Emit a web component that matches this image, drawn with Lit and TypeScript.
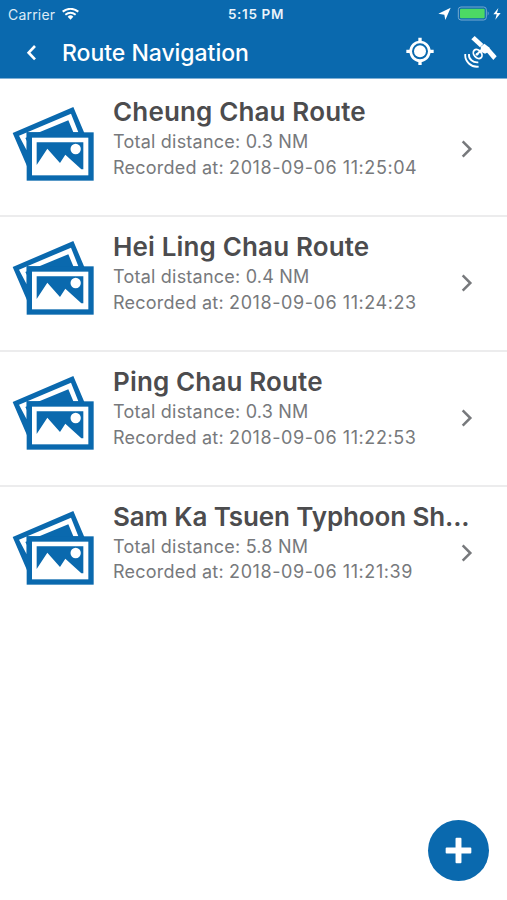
import { LitElement, html, css, svg } from "lit";
import { customElement, property } from "lit/decorators.js";
import { classMap } from "lit/directives/class-map.js";

interface Route {
  name: string;
  distance: string;
  recorded: string;
}

const ROUTES: Route[] = [
  { name: "Cheung Chau Route", distance: "0.3 NM", recorded: "2018-09-06 11:25:04" },
  { name: "Hei Ling Chau Route", distance: "0.4 NM", recorded: "2018-09-06 11:24:23" },
  { name: "Ping Chau Route", distance: "0.3 NM", recorded: "2018-09-06 11:22:53" },
  { name: "Sam Ka Tsuen Typhoon Sh...", distance: "5.8 NM", recorded: "2018-09-06 11:21:39" },
];

const SATELLITE = svg`
  <g fill="#fff">
    <path d="M66 32L76 22L102 46L92 56z"/>
    <path d="M110 68L120 58L142 83L132 94z"/>
    <path d="M94 54L105 45L121 57L119 69L107 75L95 69z"/>
  </g>
  <g fill="none" stroke="#fff">
    <ellipse cx="85" cy="76" rx="15" ry="11" transform="rotate(48 85 76)" stroke-width="5.500"/>
    <path d="M98 62L84 76" stroke-width="6"/>
    <path d="M59 76C57 91 71 103 87 101" stroke-width="5.500"/>
    <path d="M48 76C45 98 66 117 88 114" stroke-width="5.500"/>
  </g>
  <circle cx="83" cy="77" r="4" fill="#fff"/>`;

@customElement("status-bar")
class StatusBar extends LitElement {
  static styles = css`
    :host { display: grid; grid-template-columns: 1fr auto 1fr; align-items: center; height: 27px; color: #fff; }
    .left { display: flex; align-items: center; gap: 7px; padding-left: 8px; }
    .carrier { font-size: 14px; line-height: 27px; letter-spacing: 0.2px; color: #dcebf6; }
    .time { font-size: 13.5px; font-weight: 600; line-height: 27px; letter-spacing: 0.65px; margin-left: 5px; padding-top: 1px; color: #eaf3fa; }
    .right { display: flex; justify-content: flex-end; padding-right: 5px; }
    svg { display: block; }
  `;
  render() {
    return html`
      <div class="left">
        <span class="carrier">Carrier</span>
        <svg width="17" height="12" viewBox="0 2 51 36">
          <g fill="none" stroke="#fff" stroke-width="6">
            <path d="M2 13Q25.500 -4 49 13"/><path d="M10 22Q25.500 10 41 22"/>
          </g>
          <path d="M17 28Q25.500 20 34 28L25.500 37z" fill="#fff"/>
        </svg>
      </div>
      <span class="time">5:15 PM</span>
      <div class="right">
        <svg width="64" height="16" viewBox="145 17 192 48">
          <path d="M183 22L146 40L164 43L167 59z" fill="#fff"/>
          <rect x="206" y="20" width="84" height="39" rx="8" fill="none" stroke="#76a9d1" stroke-width="3"/>
          <rect x="211" y="25" width="74" height="29" rx="3" fill="#4cd964"/>
          <path d="M294 33q6 6 0 13z" fill="#76a9d1"/>
          <path d="M326 23L311 42H321L317 58L333 38H322z" fill="#fff"/>
        </svg>
      </div>`;
  }
}

@customElement("nav-bar")
class NavBar extends LitElement {
  static styles = css`
    :host { display: flex; align-items: center; height: 51px; padding: 0 9px 0 25px; color: #fff; }
    .title { flex: 1; margin-left: 25px; font-size: 23px; font-weight: 500; line-height: 50px; letter-spacing: -0.03px; white-space: nowrap; }
    .actions { display: flex; align-items: center; gap: 29px; margin-bottom: 1px; }
    svg { display: block; flex: none; }
  `;
  render() {
    return html`
      <svg width="12" height="18" viewBox="0 3 36 54"><path d="M30 9L11 29L30 49" fill="none" stroke="#fff" stroke-width="8"/></svg>
      <span class="title">Route Navigation</span>
      <div class="actions">
        <svg width="30" height="30" viewBox="46 111 90 90">
          <circle cx="91" cy="154" r="28" fill="none" stroke="#fff" stroke-width="8"/>
          <circle cx="91" cy="154" r="18" fill="#fff"/>
          <path d="M91 113V126M91 182V195M50 154H63M119 154H132" stroke="#fff" stroke-width="10" />
        </svg>
        <svg width="34" height="34" viewBox="44 19 102 102">${SATELLITE}</svg>
      </div>`;
  }
}

@customElement("route-row")
class RouteRow extends LitElement {
  @property({ attribute: false }) route!: Route;
  static styles = css`
    :host { display: flex; align-items: flex-start; box-sizing: border-box; height: 134.8px; padding: 12.600px 34px 0 12px; border-bottom: 2px solid #ececed; }
    .photo { margin-top: 10.400px; }
    .text { flex: 1; min-width: 0; margin-left: 17px; }
    .name { font-size: 26px; font-weight: 600; line-height: 34px; color: #4c4c4e; letter-spacing: 0.15px; white-space: nowrap; }
    .name.long { letter-spacing: -0.12px; }
    .meta { font-size: 18px; line-height: 25.900px; color: #77797c; letter-spacing: 0.22px; white-space: nowrap; }
    .stamp { letter-spacing: 0.57px; }
    .chevron { margin-top: 43.400px; }
    svg { display: block; flex: none; }
  `;
  render() {
    return html`
      <svg class="photo" width="84" height="76" viewBox="36 47 252 228">
        <path d="M38 128L220 50L253 128V150H90V230H82z" fill="#0a69ae"/>
        <path d="M57 136L213 70L235 126H80V180z" fill="#fff"/>
        <path d="M76 143L205 90L221 128H84V158z" fill="#0a69ae"/>
        <rect x="80" y="126" width="201" height="145" fill="#0a69ae"/>
        <rect x="96" y="142" width="169" height="113" fill="#fff"/>
        <path d="M110 156H250V237H244L196 193L180 218L142 175L110 224z" fill="#0a69ae"/>
        <circle cx="227" cy="176" r="15.500" fill="#fff"/>
      </svg>
      <div class="text">
        <div class=${classMap({ name: true, long: this.route.name.length > 20 })}>${this.route.name}</div>
        <div class="meta">Total distance: ${this.route.distance}</div>
        <div class="meta">Recorded at: <span class="stamp">${this.route.recorded}</span></div>
      </div>
      <svg class="chevron" width="12" height="20" viewBox="0 0 36 60"><path d="M5 7L28 30L5 53" fill="none" stroke="#77797c" stroke-width="7.500"/></svg>`;
  }
}

@customElement("app-root")
class AppRoot extends LitElement {
  static styles = css`
    :host { display: flex; flex-direction: column; position: relative; width: 507px; height: 900px; overflow: hidden; background: #fff; font-family: Inter, "Liberation Sans", sans-serif; }
    header { background: #0a69ae; border-bottom: 1px solid #7fb0d5; }
    main { padding-top: 3.600px; }
    route-row:last-child { border-bottom-color: transparent; }
    .add { position: absolute; right: 18px; bottom: 19px; width: 61px; height: 61px; padding: 0; border: 0; border-radius: 50%; background: #0a69ae; display: grid; place-items: center; }
    .add svg { display: block; }
  `;
  render() {
    return html`
      <header><status-bar></status-bar><nav-bar></nav-bar></header>
      <main>${ROUTES.map((r) => html`<route-row .route=${r}></route-row>`)}</main>
      <button class="add" aria-label="Add route">
        <svg width="27" height="27" viewBox="1 1 82 82"><path d="M36 3h12q3 0 3 3v27h27q3 0 3 3v12q0 3-3 3H51v27q0 3-3 3H36q-3 0-3-3V51H6q-3 0-3-3V36q0-3 3-3h27V6q0-3 3-3z" fill="#fff"/></svg>
      </button>`;
  }
}
